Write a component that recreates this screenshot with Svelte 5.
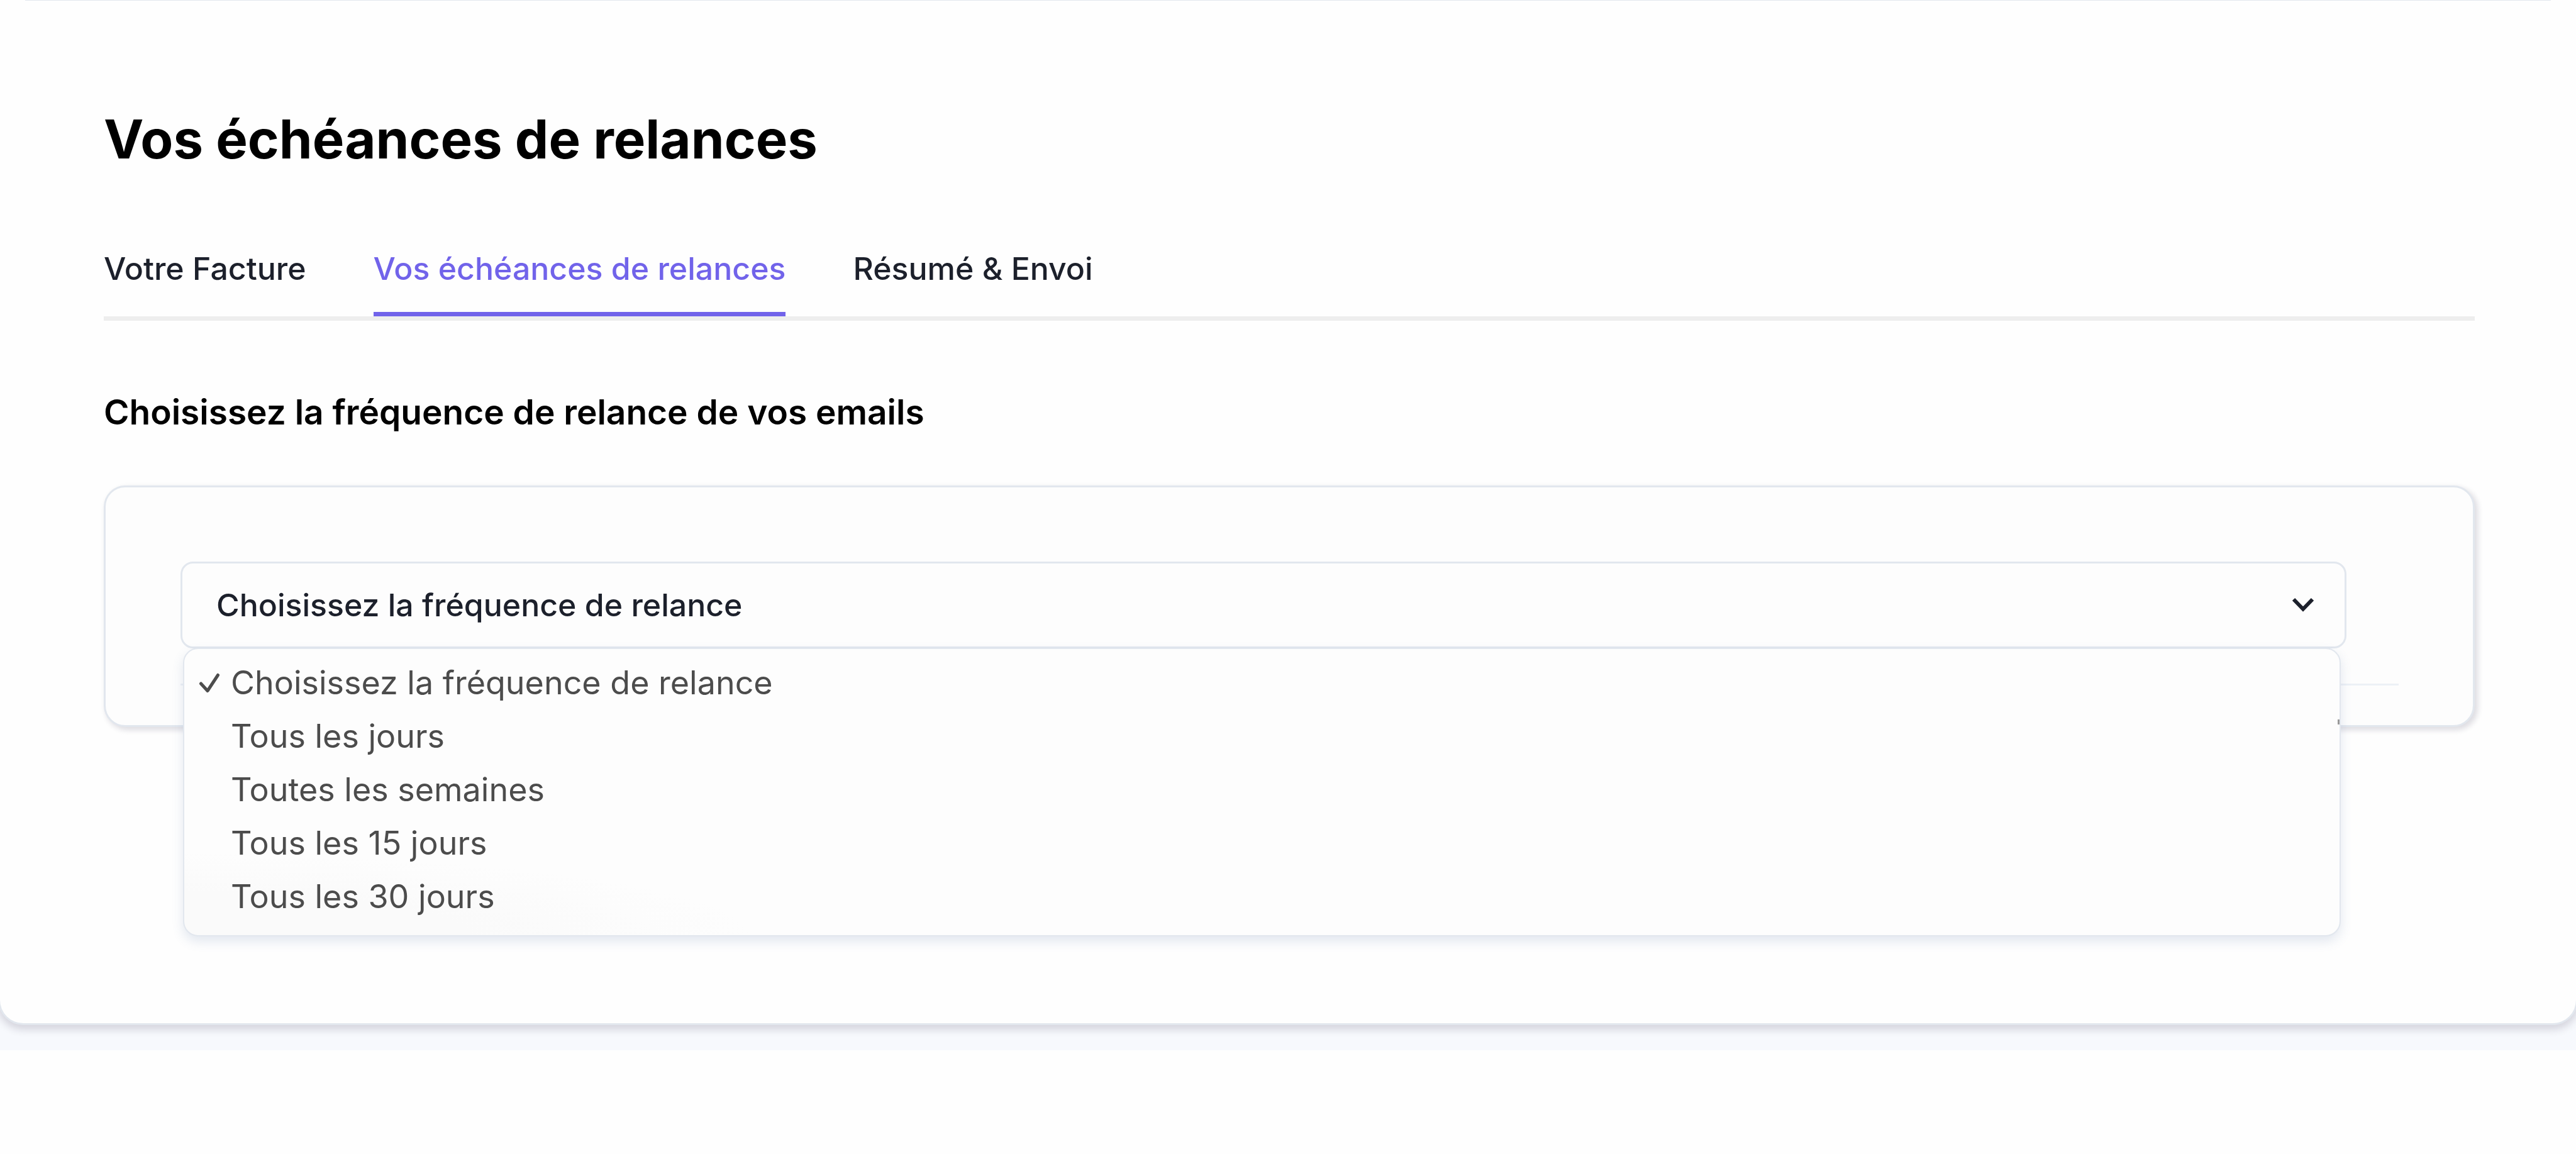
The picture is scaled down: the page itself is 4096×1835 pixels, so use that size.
<script lang="ts">
  const tabs = [
    { id: 'facture', label: 'Votre Facture' },
    { id: 'echeances', label: 'Vos échéances de relances' },
    { id: 'envoi', label: 'Résumé & Envoi' }
  ];
  const options = [
    'Choisissez la fréquence de relance',
    'Tous les jours',
    'Toutes les semaines',
    'Tous les 15 jours',
    'Tous les 30 jours'
  ];
  let activeTab = $state('echeances');
  let selected = $state(options[0]);
</script>

<div class="page">
  <main class="sheet">
    <h1>Vos échéances de relances</h1>

    <nav class="tabs" aria-label="Étapes">
      {#each tabs as tab}
        <button
          type="button"
          class="tab"
          class:active={tab.id === activeTab}
          onclick={() => (activeTab = tab.id)}>{tab.label}</button>
      {/each}
    </nav>

    <h2 id="frequency-title">Choisissez la fréquence de relance de vos emails</h2>

    <section class="panel">
      <div class="field">
        <select aria-labelledby="frequency-title" bind:value={selected}>
          {#each options as option}
            <option value={option}>{option}</option>
          {/each}
        </select>
        <svg class="chevron" viewBox="0 0 36 24" aria-hidden="true">
          <path d="M3 3 18 18.500 33 3" />
        </svg>

        <ul class="menu" role="listbox" aria-labelledby="frequency-title">
          {#each options as option}
            <li role="option" aria-selected={option === selected}>
              <span class="mark">
                {#if option === selected}
                  <svg viewBox="0 0 32 32" aria-hidden="true">
                    <path d="M2.500 17 13 28.500 29.500 3.500" />
                  </svg>
                {/if}
              </span>
              {option}
            </li>
          {/each}
        </ul>
      </div>
      <hr />
    </section>
  </main>
</div>

<style>
  :global(body) {
    margin: 0;
    background: #fefefe;
  }

  .page {
    overflow: hidden;
    padding-bottom: 40px;
    background: linear-gradient(#fefefe 50%, #f7f9fd 50%);
    font-family: Inter, 'Liberation Sans', sans-serif;
  }

  .sheet {
    margin: 0 -3px;
    padding: 162px 161px 471px 165px;
    border: 3px solid #e2e7ee;
    border-top: 0;
    border-radius: 0 0 40px 40px;
    background: linear-gradient(#e2e7ee, #e2e7ee) top / calc(100% - 80px) 1px no-repeat #fefefe;
    box-shadow: 0 6px 13px 1px rgba(30, 20, 50, 0.16);
  }

  h1 {
    margin: 0;
    font-size: 85px;
    font-weight: 700;
    line-height: 120px;
    color: #000;
  }

  .tabs {
    display: flex;
    gap: 107px;
    margin-top: 109px;
    border-bottom: 7px solid #eee;
  }

  .tab {
    padding: 0 0 33px;
    border: 0;
    border-bottom: 7px solid transparent;
    background: none;
    font: 500 50px/72px Inter, 'Liberation Sans', sans-serif;
    color: #1c202b;
    cursor: pointer;
  }

  .tab.active {
    border-color: #7163ea;
    color: #7163ea;
  }

  h2 {
    margin: 109px 0 0;
    font-size: 55px;
    font-weight: 600;
    line-height: 72px;
    color: #000;
  }

  .panel {
    margin-top: 81px;
    padding: 118px 118px 63px 119px;
    border: 3px solid #e2e7ee;
    border-radius: 34px;
    background: #fdfdfd;
    box-shadow: 4px 4px 9px 1px rgba(30, 20, 60, 0.14);
  }

  .field {
    position: relative;
    margin-right: 83px;
  }

  select {
    display: block;
    width: 100%;
    height: 138px;
    padding: 0 120px 0 54px;
    border: 3px solid #e2e7ee;
    border-radius: 20px;
    appearance: none;
    background: #fdfdfd;
    font: 500 50px/72px Inter, 'Liberation Sans', sans-serif;
    color: #1c202b;
  }

  .chevron {
    position: absolute;
    top: 57px;
    right: 51px;
    width: 36px;
    height: 24px;
    fill: none;
    stroke: #1c202b;
    stroke-width: 6;
    pointer-events: none;
  }

  .menu {
    position: absolute;
    top: 137px;
    left: 4px;
    right: 9px;
    z-index: 1;
    margin: 0;
    padding: 11px 0 19px;
    border: 2px solid #e2e7ee;
    border-radius: 24px;
    background: radial-gradient(ellipse 900px 130px at 0 100%, #fafafa 50%, #fdfdfd 100%) #fdfdfd;
    box-shadow: 0 8px 18px rgba(80, 110, 160, 0.16);
    list-style: none;
    font-size: 52px;
    line-height: 85px;
    color: #4c4c4c;
  }

  /* sliver of the content hidden behind the list */
  .menu::after {
    content: '';
    position: absolute;
    top: 112px;
    right: 0;
    width: 3px;
    height: 8px;
    background: #999;
  }

  .menu li {
    display: flex;
    align-items: center;
  }

  .mark {
    display: flex;
    flex: none;
    width: 50px;
    padding-left: 24px;
  }

  .mark svg {
    width: 32px;
    height: 32px;
    fill: none;
    stroke: #4c4c4c;
    stroke-width: 5;
    stroke-linecap: round;
    stroke-linejoin: round;
  }

  hr {
    height: 3px;
    margin: 56px 0 0;
    border: 0;
    background: #edf1f6;
  }
</style>
